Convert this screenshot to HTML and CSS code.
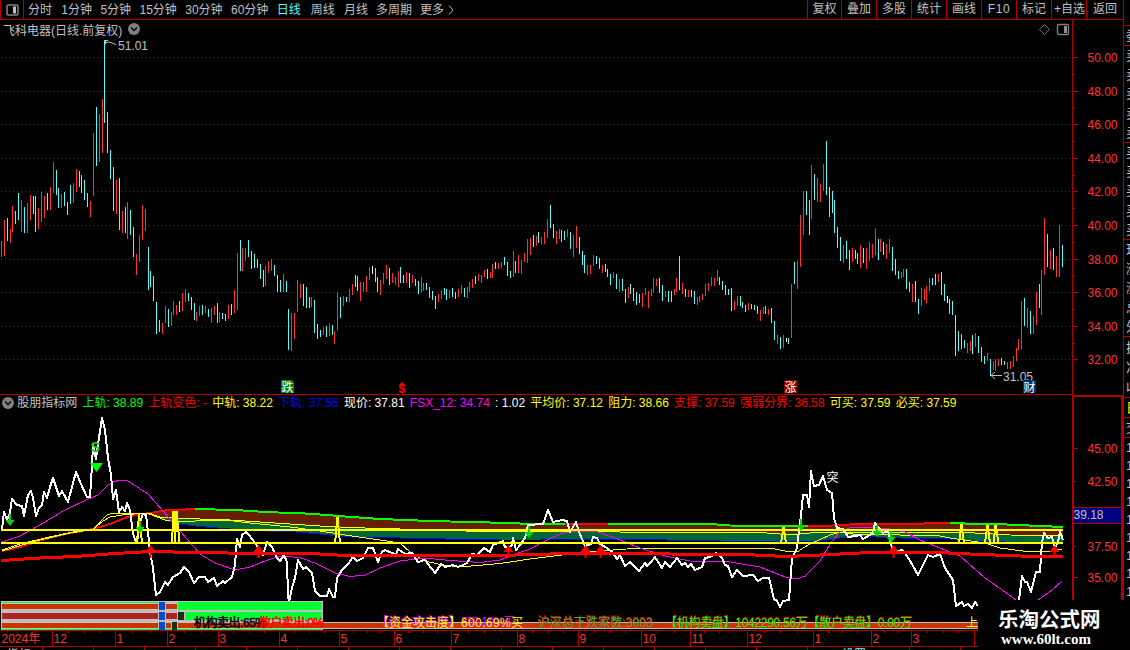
FILE: index.html
```html
<!DOCTYPE html>
<html lang="zh-CN">
<head>
    <meta charset="UTF-8">
    <meta name="viewport" content="width=device-width, initial-scale=1.0">
    <title>飞科电器 日线</title>
    <link rel="stylesheet" href="styles.css">
</head>
<body>

<div class="app">
    <div class="main">
        <!-- Toolbar -->
        <div class="toolbar">
            <div class="layout-btn">
                <svg width="13" height="12" viewBox="0 0 13 12"><rect x="1" y="1" width="11" height="10" rx="1.5" fill="none" stroke="#808080" stroke-width="1.6"/><rect x="7" y="2.5" width="3" height="7" fill="#c0c0c0"/></svg>
            </div>
            <div class="periods">
                <span>分时</span>
                <span class="num">1分钟</span>
                <span class="num">5分钟</span>
                <span class="num">15分钟</span>
                <span class="num">30分钟</span>
                <span class="num">60分钟</span>
                <span class="active">日线</span>
                <span>周线</span>
                <span class="near">月线</span>
                <span class="near">多周期</span>
                <span>更多</span>
                <svg class="more" width="6" height="10" viewBox="0 0 6 10"><path d="M1 .5L5 5L1 9.5" fill="none" stroke="#c0c0c0"/></svg>
            </div>
            <div class="tools">
                <span class="first">复权</span>
                <span>叠加</span>
                <span>多股</span>
                <span>统计</span>
                <span>画线</span>
                <span class="f10">F10</span>
                <span>标记</span>
                <span class="fav">+自选</span>
                <span class="last">返回</span>
            </div>
        </div>

        <!-- Price chart -->
        <div class="panel price">
            <div class="title">
                <span>飞科电器(日线.前复权)</span>
                <svg width="12" height="12" viewBox="0 0 12 12"><circle cx="6" cy="6" r="6" fill="#808080"/><path d="M3 4.5L6 7.5L9 4.5" fill="none" stroke="#000" stroke-width="1.3"/></svg>
            </div>
            <svg class="chart" width="1123" height="375" viewBox="0 20 1123 375">
                <g id="grid" class="grid"></g>
                <path id="upBars" class="up"/>
                <path id="downBars" class="down"/>
                <path id="flatBars" class="flat"/>
                <g id="priceAxis" class="axis"></g>
                <path class="axis-line" d="M1072.5 20V395M0 394.5H1072"/>
                <path class="pointer" d="M104 40.500H108M105.500 40V44M106 42.500L109 42L116 44.500"/>
                <text class="gray" x="118" y="50">51.01</text>
                <path class="pointer" d="M991 375.500H1002M995 372L991 375.500L995 379"/>
                <text class="gray" x="1003" y="381">31.05</text>
                <path d="M1044.500 24.500L1049.500 29.500L1044.500 34.500L1039.500 29.500Z" fill="none" stroke="#707070"/>
                <rect x="1057.500" y="24.500" width="11" height="10" rx="1.500" fill="none" stroke="#808080" stroke-width="1.400"/>
                <rect x="1064" y="26" width="3" height="7" fill="#909090"/>
                <g class="badge">
                    <path d="M281 380H292L294 382V393H281Z" fill="#008000"/>
                    <text x="281.500" y="391.500">跌</text>
                    <rect x="784" y="380" width="13" height="13" fill="#800000"/>
                    <text x="784.500" y="391.500">涨</text>
                    <rect x="1023" y="380" width="13" height="13" fill="#003366"/>
                    <text x="1023.500" y="391.500">财</text>
                </g>
                <path d="M399 385L402 382L405 385Z" fill="#f00"/>
                <text class="dollar" x="398.500" y="393">$</text>
            </svg>
        </div>

        <!-- Indicator -->
        <div class="panel indicator">
            <div class="legend">
                <svg width="12" height="12" viewBox="0 0 12 12"><circle cx="6" cy="6" r="6" fill="#808080"/><path d="M3 4.5L6 7.5L9 4.5" fill="none" stroke="#000" stroke-width="1.3"/></svg>
                <span class="name">股朋指标网</span>
                <span class="green">上轨: 38.89</span>
                <span class="red">上轨变色: -</span>
                <span class="yellow">中轨: 38.22</span>
                <span class="blue">下轨: 37.55</span>
                <span class="white">现价: 37.81</span>
                <span class="magenta">FSX_12: 34.74</span>
                <span class="white">: 1.02</span>
                <span class="yellow">平均价: 37.12</span>
                <span class="yellow">阻力: 38.66</span>
                <span class="red">支撑: 37.59</span>
                <span class="red">强弱分界: 36.58</span>
                <span class="yellow">可买: 37.59</span>
                <span class="yellow">必买: 37.59</span>
            </div>
            <svg class="chart" width="1123" height="235" viewBox="0 395 1123 235">
                <!-- channel -->
                <path fill="#661f00" d="M145 514L165 510L195 509L235 510L265 512L305 513.500L345 516.500L380 519L430 521L490 522.500L520 523.500L711 524L730 525.500L808 526L858 524L950 523L1007 524.500L1040 526L1063 527V536L975 533L880 531H840L800 532L780 534L760 532.500H640L600 531.500L520 532L465 531L420 529.500L380 528.500L350 527.500L320 526L290 524L260 522L230 520L185 518.500L160 517Z"/>
                <path fill="#006633" d="M150 514L160 517L185 518.500L230 520L260 522L290 524L320 526L350 527.500L380 528.500L420 529.500L465 531L520 532L600 531.500L640 532.500H760L780 534L800 532L840 531H880L975 533L1063 536V544L975 541L950 539L900 538L865 536.500L840 538L820 541L800 542L720 541L640 539.500H600L540 540H500L445 539L400 538L350 537L320 534L290 531.500L265 531L230 529L200 526.500L180 524L165 520Z"/>
                <path class="ln blue-ln" d="M165 520L180 524L200 526.500L230 529L265 531L290 531.500L320 534L350 537L400 538L445 539L500 540H540L600 539.500H640L720 541L800 542L820 541L840 538L865 536.500L900 538L950 539L975 541L1063 544"/>
                <path class="ln red-ln" d="M2 551L20 547L45 539L70 533L93 529L110 524L125 518L135 515L150 513L165 510.500L195 509"/>
                <path class="ln yellow-ln" d="M2 550L20 544L45 538L70 532.500L93 529L100 522L107 515L112 513.500H150L160 517L185 518.500L230 520L260 522L290 524L320 526L350 527.500L380 528.500L420 529.500L465 531L520 532L600 531.500L640 532.500H760L780 534L800 534L820 532H880L975 533L1010 535L1063 536"/>
                <path class="ln yellow-ln" d="M2 551L22 545L40 540L70 533L93 529.500L103 521L110 517L122 515L140 513.500H148L165 520L180 521.500L195 521L230 520.500L250 523L290 527L320 531L345 535L380 540L400 543L410 552L425 561L440 564.500L460 567L500 563.500L530 559L570 554L600 551L640 548H770L785 551L798 551.500L808 545L830 535L840 532L860 535L880 534.500L920 535.500L935 535L950 538L985 543L1000 548L1030 552L1052 551L1062 549"/>
                <path class="ln band green-ln" d="M195 509L235 510L265 512L305 513.500L320 514.500L345 516.500L380 519L430 521L490 522.500L520 523.500H565M608 524H711L730 525.500L778 526H808M950 523L980 524L1007 524.500L1040 526L1063 527"/>
                <path class="ln band red-ln" d="M565 523.500H608M808 526L833 525.500L858 524H898L950 523"/>
                <path class="ln magenta-ln" d="M2 542L20 536L40 525L63 511L88 499L98 495L108 485L113 482L120 480L128 481L148 494L163 511L180 531L200 554L215 563L235 570L250 567L265 561L280 556L300 557.500L315 563L335 573L350 576.500L365 575L380 568L400 561L425 558L450 560.500L480 562.500L500 560L515 554L530 549L545 541L560 534L573 531H595L615 538L640 548L665 556L690 561L730 562L760 567L785 577L797 579L805 576L820 561L832 541L840 532L852 527L870 527L890 529L905 532L920 540L940 548L960 556L985 578L1005 592L1016 600M1038 600L1052 590L1062 581"/>

                <!-- price -->
                <path class="ln white-ln" d="M2 529L4 512L7 520L10 513L12 499L17 505L22 506L24 516L28 495L31 491L33 498L36 516L39 508L42 505L44 492L47 498L50 487L53 478L56 487L59 496L62 491L68 502L72 487L76 472L81 484L87 497H90L92 465L93 445L96 459L99 438L102 418L105 430L108 458L111 475L113 499L116 490L119 512L122 507L125 511L127 503L130 510L133 533L135 540L137 542L140 522L143 514L146 515L148 532L150 552L153 568L156 595L160 592L165 582L168 585L173 577L180 573L184 567L189 572L194 583L199 577H205L208 582L214 578L217 586L223 581L225 583L232 577L235 565L237 539L240 547L242 535L246 532L249 535L255 543L260 550L263 555L267 542L272 547L277 558L280 561L284 555L287 562L288 595L289 602L292 588L295 578L298 560L303 569L306 567L312 573L315 591L320 596H327L329 589L333 597H335L337 578L342 570L345 567L348 564L353 557L357 561L363 558L368 548H373L378 562L382 552L385 550L392 553L396 554L398 549L405 554L412 553L418 562L425 560L435 573L441 564L445 567L453 565L458 567L463 565L467 563L472 554L477 555L484 548L490 552L493 545L503 541L505 547L508 548L512 545L513 538L516 550L520 545L525 538L528 525L543 524L548 510L553 522L562 520L567 521L570 532L576 522L579 532L585 546L591 544L593 537L597 538L600 544L607 548L613 553L617 559L620 555L625 566L630 562L639 571L645 563L647 566L651 562L655 557L662 568L665 562L670 567L677 558L682 565L685 563L688 567L691 564L695 570L702 567L705 558L710 557L716 553L722 558L725 565L728 566L732 577L737 570L743 576L753 575L758 581L763 578L769 578L774 599L777 601L780 607L783 601L789 600L792 558L797 548L801 515L803 495H807L809 507L811 471L814 486L819 485L823 476L827 490L832 493L834 518L837 528L843 529L848 537L855 536L860 535L863 539L870 535L873 533L875 523L878 527L883 533L888 531L890 540L893 552L902 550L905 553L912 564L918 575L928 555L933 557L940 554L945 568L953 580L956 606L962 602L964 606L968 604L972 608L975 602L978 606M1019 600L1022 576L1025 582H1027L1031 592L1036 572H1040L1042 542L1044 533L1048 538L1052 537L1055 548L1058 542L1060 532L1063 540"/>

                <path class="ln level" d="M1 530H1063M1 543H1063"/>
                <path class="ln strong" d="M1 560.500L40 558L75 556.500L115 553.500L150 551.500L195 552.500L260 553.500L320 554L345 555.500H500L550 554L600 553L670 554L745 554.500L785 556.500L810 555.500L860 553L880 552H925L970 554L1020 556L1063 556.500"/>
                <path class="ln peak" d="M137 543L139 514L142 543M172 543L173.500 511L175 543L176.500 511L179.500 543M335 543L337.500 517L340 543M781 543L783.500 527L786 543M959 543L961.500 524L964 543M985 543L987.500 525L990 543M993.500 543L995.500 525L998.500 543"/>

                <g id="signals"></g>
                <text class="sell-mark" x="90.500" y="452">S</text>
                <path d="M90 463H103L96.500 472Z" fill="#0f0"/>
                <text x="826.500" y="481.500" fill="#fff">突</text>

                <!-- buy / sell volume bars -->
                <g shape-rendering="crispEdges">
                    <rect x="1" y="601" width="322" height="29" fill="#c0c0c0"/>
                    <rect x="323" y="622" width="655" height="7" fill="#c0c0c0"/>
                    <path d="M2 602H158V603H2ZM178 602H322V610H178ZM185 612H322V620H185ZM2 629H322V630H2Z" fill="#00ff33"/>
                    <path d="M2 604H158V609H2ZM166 604H177V609H166ZM2 623H158V628H2ZM166 623H171V628H166ZM178 623H978V628H178Z" fill="#cc3300"/>
                    <path d="M2 613H158V619H2ZM166 613H177V619H166Z" fill="#b22222"/>
                    <path d="M159 602H165V610H159ZM159 612H165V620H159ZM159 622H165V630H159Z" fill="#004ccc"/>
                    <path d="M178 612H184V620H178ZM172 622H177V630H172Z" fill="#123312"/>
                </g>
                <g class="notes">
                    <text x="194" y="627" textLength="72" fill="#000" stroke="#000" stroke-width=".5">机构卖出:65%</text>
                    <text x="259" y="627" textLength="65" fill="#f00" stroke="#f00" stroke-width=".5">散户卖出:0%</text>
                    <text x="376" y="626" textLength="84" fill="#f0f">【资金攻击度】</text>
                    <text x="377" y="627" textLength="84" fill="#ff0">【资金攻击度】</text>
                    <text x="461" y="626" textLength="54" fill="#f0f">550.19%买</text>
                    <text x="461" y="627" textLength="62" fill="#ff0">600.69%买</text>
                    <text x="537" y="626" textLength="115" fill="#f00">沪深总市跌家数:3003</text>
                    <text x="538" y="627" textLength="115" fill="#40b040">沪深总下跌家数:3003</text>
                    <text x="665" y="626" textLength="247" fill="#f00">【机构卖盘】1042290.56万【散户卖盘】0.00万</text>
                    <text x="665" y="627" textLength="247" fill="#0f0">【机构卖盘】1042290.56万【散户卖盘】0.00万</text>
                    <text x="966" y="627" fill="#ff0">上</text>
                </g>

                <!-- value axis -->
                <path d="M1073 630V396H1122V630" fill="none" stroke="#b00000" stroke-width="2"/>
                <path class="axis-line" d="M1074 448.500H1078M1074 481.500H1076M1074 546.500H1076M1074 577.500H1078"/>
                <rect x="1074" y="508" width="47" height="15" fill="#000080"/>
                <path class="axis-line" d="M1074 507.500H1121M1074 523.500H1121"/>
                <g class="axis">
                    <text x="1087.500" y="453">45.00</text>
                    <text x="1087.500" y="486">42.50</text>
                    <text x="1087.500" y="551">37.50</text>
                    <text x="1087.500" y="582">35.00</text>
                </g>
                <text class="gray" x="1073.500" y="519">39.18</text>
            </svg>
        </div>

        <!-- Time axis -->
        <svg class="time" width="1123" height="20" viewBox="0 630 1123 20">
            <path class="axis-line" d="M0 630.500H978M0 646.500H978"/>
            <g id="months" class="axis"></g>
            <text class="gray" x="7" y="659">指标</text>
            <text x="842" y="659" fill="#54fcfc">设置</text>
        </svg>
    </div>

    <!-- Quote list cut off by the window edge -->
    <div class="side">
        <div class="rows head"></div>
        <div class="rows r1"><span>委</span></div>
        <div class="rows r5"><span>卖</span><span>卖</span><span>卖</span><span>卖</span><span>卖</span></div>
        <div class="rows r5"><span>买</span><span>买</span><span>买</span><span>买</span><span>买</span></div>
        <div class="rows r5"><span>现</span><span>涨</span><span>涨</span><span>总</span><span>外</span></div>
        <div class="rows r3"><span>换</span><span>净</span><span>收</span></div>
        <div class="rows r1 yellow"><span>日</span></div>
        <div class="rows r1"><span>交</span></div>
        <div class="rows ticks"><span>1</span><span>1</span><span>1</span><span>1</span><span>1</span><span>1</span><span>1</span><span>1</span><span>1</span></div>
    </div>

    <div class="watermark">
        <div class="brand">乐淘公式网</div>
        <div class="site">www.60lt.com</div>
    </div>
</div>

<script>
    // one entry per day: r = up, c = down, w = unchanged, then high and low pixel
    const days = `
        r241-257 r220-256 c218-241 r229-243 r206-232 c211-224 c193-220 r200-232 c207-233 r203-233
        r195-220 c196-214 c196-232 r208-229 r192-222 r196-218 c193-210 r187-210 r162-193 c170-195
        c188-208 r194-208 c192-206 c202-215 c185-204 r183-203 r169-192 c171-187 c175-193 c180-200
        c193-207 r201-217 r133-196 c107-166 r114-162 r99-153 c40-123 c112-153 c150-179 c167-211
        r180-214 c178-230 r211-233 c207-233 r202-239 c210-235 c227-257 r254-275 r235-262 r205-240
        r209-231 c247-290 c271-287 c276-301 c302-334 c320-332 r323-334 r306-323 c309-327 r312-326
        r301-315 r305-315 c301-312 r293-311 r289-302 c293-301 c297-310 c303-320 r312-321 r306-316
        c305-315 r306-313 c309-317 r308-323 r306-315 c303-323 r312-322 c313-319 c314-321 r305-319
        c304-315 r290-313 r253-310 c240-271 r248-271 r248-261 c240-257 c251-269 c254-268 c259-268
        c264-279 c270-287 r266-286 r261-273 r259-271 c265-276 c275-292 c280-292 r274-292 c281-292
        c309-350 r313-351 r313-339 r280-312 r284-298 c284-306 c287-308 c297-308 r297-307 c300-333
        c324-339 c330-337 r327-335 c326-337 r323-336 c325-335 r331-344 r292-331 c297-318 r296-306
        c297-302 r289-302 r284-295 c275-287 c276-291 r282-301 r282-292 r276-292 r267-280 w266-274
        c268-282 c277-292 r280-295 r273-284 r265-279 c268-285 r273-283 r277-285 r271-287 c267-283
        c275-283 r272-283 c273-288 r275-283 c279-286 c281-294 r277-292 r283-291 c283-290 c287-298
        c291-300 c296-309 r294-302 r290-299 c288-295 c289-300 r290-298 c288-297 c292-299 r289-297
        r285-294 c288-297 r287-298 r282-292 r279-288 c276-284 r274-281 r275-283 r270-277 c269-279
        r272-278 r264-278 c262-269 r263-269 r262-268 c257-265 c262-276 c271-278 r251-277 c261-273
        r255-273 r260-274 r253-262 r239-263 r238-255 c235-247 r236-246 c232-243 r237-244 r232-244
        r219-238 c205-228 c224-238 r231-244 r229-239 c230-242 c231-240 r229-237 c232-249 r235-257
        r226-248 c237-254 c251-265 c255-273 r265-275 r265-274 r255-266 c256-264 c258-269 r265-273
        c264-272 c269-277 c274-285 r272-278 c274-289 r279-292 c279-291 c289-303 r287-298 c284-294
        c288-301 c292-305 c294-303 r293-307 r288-295 r291-308 r289-296 r278-293 r279-286 c278-293
        c285-301 r291-297 c291-302 c291-302 r289-295 r278-292 c256-290 r283-294 c289-297 r290-297
        c290-297 c291-304 r297-305 r296-302 r294-300 r284-296 r283-291 r277-286 r278-286 r270-281
        c277-285 c281-290 c285-295 c289-295 c288-311 r301-310 r296-306 c296-306 c302-308 c305-312
        r303-310 c304-309 c305-310 c306-314 r310-321 r307-314 c306-314 r309-315 c308-323 c321-340
        r335-344 c337-349 r335-348 w338-342 c338-344 r284-338 c262-284 r261-289 r215-267 r191-235
        c191-215 c200-235 r165-219 c174-200 r178-202 r184-202 r164-191 c141-195 c187-217 c191-213
        c200-233 c227-248 c237-261 r245-263 c241-259 c250-270 r248-262 c250-259 c253-264 r245-268
        c248-263 r248-269 r242-261 r244-258 r228-255 c239-260 r239-252 c242-255 r244-259 r239-253
        c247-271 c259-275 c271-279 r272-278 r269-277 c269-289 c282-292 r284-302 c281-302 c299-314
        r288-306 r289-300 r286-303 r278-291 c278-285 c274-285 r274-282 c272-295 c284-301 w296-303
        c299-314 c301-315 c315-356 c331-351 c334-349 c340-348 r343-353 r341-351 c335-354 r333-347
        c336-353 c347-362 c356-364 r353-361 c359-376 r361-370 r359-371 r359-366 c358-365 c361-365
        r362-369 r361-369 r356-367 r348-361 r339-350 r301-349 c298-326 r308-328 c311-334 r316-334
        r292-325 c284-308 r270-315 r218-275 c234-267 r250-269 c248-270 r256-277 r225-277 c245-267
    `.trim().split(/\s+/);

    let bars = { r: "", c: "", w: "" };
    days.forEach((day, i) => {
        let x = Math.floor(1.499 + 2.874 * i) + 0.5;
        let [top, bottom] = day.slice(1).split("-");
        bars[day[0]] += `M${x} ${top}V${bottom}`;
    });
    document.getElementById("upBars").setAttribute("d", bars.r);
    document.getElementById("downBars").setAttribute("d", bars.c);
    document.getElementById("flatBars").setAttribute("d", bars.w);

    // price grid and axis labels
    let grid = "", axis = "";
    [57, 91, 124, 158, 191, 225, 259, 292, 326, 359].forEach((y, i) => {
        grid += `<path d="M1 ${y + 0.5}H1071"/>`;
        axis += `<path d="M1072 ${y + 0.5}H1078"/><text x="1087.5" y="${y + 5}">${50 - i * 2}.00</text>`;
        if (i < 9) axis += `<path d="M1072 ${y + 17.5}H1075"/>`;
    });
    document.getElementById("grid").innerHTML = grid;
    document.getElementById("priceAxis").innerHTML = axis;

    // months
    const months = [[0, "2024年"], [52, 12], [115, 1], [167, 2], [218, 3], [279, 4], [339, 5], [394, 6], [451, 7],
        [517, 8], [578, 9], [641, 10], [690, 11], [747, 12], [813, 1], [871, 2], [911, 3], [974, ""]];
    let html = "";
    months.forEach(([x, label], i) => {
        if (i > 0) html += `<path d="M${x + 0.5} 630V647"/>`;
        html += `<text x="${x + 1.5}" y="643">${label}</text>`;
        let next = months[i + 1];
        if (!next) return;
        let parts = Math.round((next[0] - x) / 15);
        for (let k = 1; k < parts; k++) {
            html += `<path d="M${Math.round(x + (next[0] - x) * k / parts) + 0.5} 631V633"/>`;
        }
    });
    for (let x = 42; x < 978; x += 51) html += `<path d="M${x + 0.5} 647V650"/>`;
    document.getElementById("months").innerHTML = html;

    // arrows
    const down = [[9, 520], [139, 527], [528, 532], [800, 525], [876, 531], [890, 537]];
    const up = [150, 258, 508, 585, 600, 893, 1054];
    let marks = "";
    down.forEach(([x, y]) => {
        marks += `<path fill="#00d800" d="M${x} ${y - 6}h2v6h3.500l-4.500 6l-4.500 -6h3.500z"/>`;
    });
    up.forEach(x => {
        marks += `<path fill="#f00" d="M${x + 0.5} 545l5 7h-4v6h-2v-6h-4z"/>`;
    });
    document.getElementById("signals").innerHTML = marks;
</script>

</body>
</html>
```
FILE: styles.css
```css
body {
    margin: 0;
    background: #000;
    color: #c0c0c0;
    font-family: "Liberation Sans", "Noto Sans CJK SC", sans-serif;
    font-size: 12px;
    overflow: hidden;
}
.app {
    position: relative;
    display: flex;
    width: 1130px;
    height: 650px;
    overflow: hidden;
}
.main {
    width: 1123px;
    flex: none;
}
svg {
    display: block;
    flex: none;
}

/* toolbar */
.toolbar {
    display: flex;
    height: 19px;
    line-height: 18px;
    border-bottom: 1px solid #b00000;
    white-space: nowrap;
}
.layout-btn {
    width: 22px;
    display: flex;
    align-items: center;
    justify-content: center;
    border-left: 1px solid #b00000;
    border-right: 1px solid #b00000;
}
.periods {
    display: flex;
    align-items: center;
    flex: 1;
    padding-left: 4px;
}
.periods span {
    margin-right: 9.3px;
}
.periods .num {
    margin-right: 8.4px;
}
.periods .active {
    margin-right: 10px;
    color: #54fcfc;
}
.periods .near {
    margin-right: 8px;
}
.periods .more {
    margin-left: -5px;
}
.tools {
    display: flex;
}
.tools span {
    box-sizing: border-box;
    width: 35px;
    text-align: center;
    border-left: 1px solid #b00000;
}
.tools .first {
    width: 34px;
}
.tools .last {
    width: 37px;
}
.tools .f10 {
    letter-spacing: 0.6px;
}
.tools .fav {
    padding-left: 1px;
}

/* charts */
.panel {
    position: relative;
}
.title {
    position: absolute;
    left: 3px;
    top: 0;
    height: 18px;
    display: flex;
    align-items: center;
    gap: 6px;
}
.legend {
    position: absolute;
    left: 2px;
    top: 0;
    height: 16px;
    display: flex;
    align-items: center;
    gap: 5.2px;
    white-space: pre;
}
.legend span {
    line-height: 14px;
    margin-top: -1px;
}
.legend .name {
    margin-left: -2px;
}
.green { color: #0f0; }
.red { color: #f00; }
.yellow { color: #ff0; }
.blue { color: #00f; }
.white { color: #fff; }
.magenta { color: #f0f; }

.grid path {
    stroke: #b00000;
    stroke-dasharray: 1 3;
    shape-rendering: crispEdges;
}
.up, .down, .flat {
    fill: none;
    shape-rendering: crispEdges;
}
.up { stroke: #ff3232; }
.down { stroke: #54fcfc; }
.flat { stroke: #fff; }
.axis-line, .axis path {
    fill: none;
    stroke: #b00000;
    shape-rendering: crispEdges;
}
.axis text {
    fill: #ff3232;
}
.gray {
    fill: #c0c0c0;
}
.pointer {
    fill: none;
    stroke: #c0c0c0;
}
.badge text {
    fill: #fff;
}
.dollar {
    fill: #f00;
    font-weight: bold;
}

/* indicator lines */
.ln {
    fill: none;
    stroke-width: 1;
    shape-rendering: crispEdges;
}
.band, .red-ln, .white-ln, .level, .peak { stroke-width: 2; }
.blue-ln { stroke: #00f; }
.red-ln { stroke: #f00; }
.green-ln { stroke: #0f0; }
.yellow-ln, .level, .peak { stroke: #ff0; }
.magenta-ln { stroke: #f0f; }
.white-ln {
    stroke: #fff;
    stroke-linejoin: round;
}
.strong {
    stroke: #f00;
    stroke-width: 3;
}
.sell-mark {
    fill: #00d800;
    font-size: 14px;
    font-weight: bold;
}

/* right strip */
.side {
    box-sizing: border-box;
    width: 7px;
    border-left: 1px solid #b00000;
    overflow: hidden;
}
.rows {
    display: flex;
    flex-direction: column;
    justify-content: space-around;
    box-sizing: border-box;
    padding-left: 2px;
    border-bottom: 1px solid #b00000;
    line-height: 17px;
    font-size: 13px;
}
.head { height: 26px; }
.r1 { height: 20px; }
.r5 { height: 97px; }
.r3 { height: 61px; }
.ticks {
    border: none;
    height: 162px;
}

/* watermark */
.watermark {
    position: absolute;
    left: 978px;
    top: 600px;
    width: 152px;
    height: 50px;
    background: #000;
    color: #fff;
    font-weight: bold;
}
.brand {
    padding: 6px 0 0 20px;
    font-family: "Noto Sans CJK SC", sans-serif;
    font-size: 20.5px;
    line-height: 25px;
}
.site {
    padding-left: 23px;
    font-family: "Liberation Serif", serif;
    font-size: 15px;
    line-height: 17px;
}
```
